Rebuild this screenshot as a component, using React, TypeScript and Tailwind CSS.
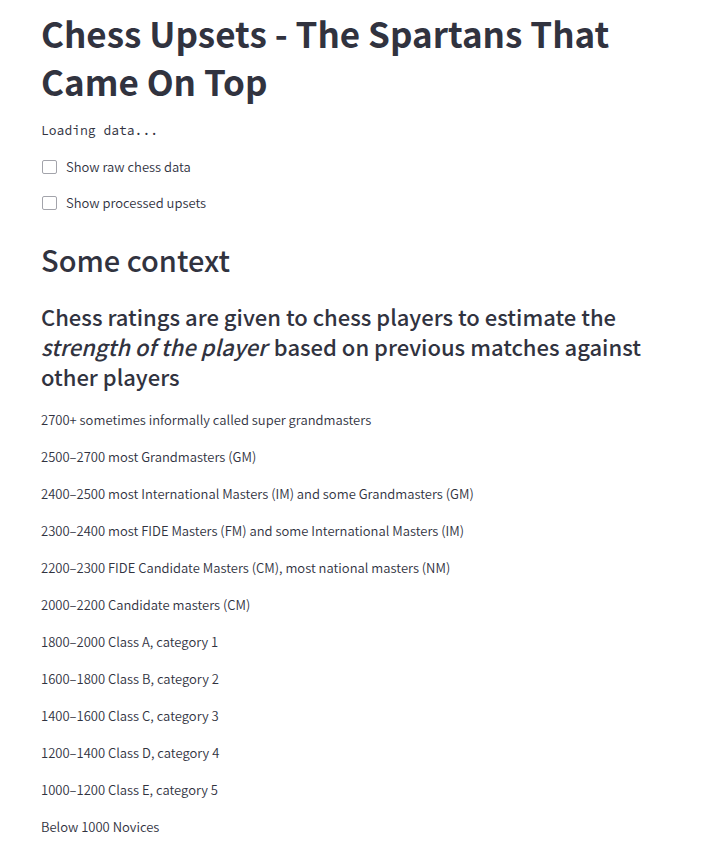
const ratings = [
  '2700+ sometimes informally called super grandmasters',
  '2500–2700 most Grandmasters (GM)',
  '2400–2500 most International Masters (IM) and some Grandmasters (GM)',
  '2300–2400 most FIDE Masters (FM) and some International Masters (IM)',
  '2200–2300 FIDE Candidate Masters (CM), most national masters (NM)',
  '2000–2200 Candidate masters (CM)',
  '1800–2000 Class A, category 1',
  '1600–1800 Class B, category 2',
  '1400–1600 Class C, category 3',
  '1200–1400 Class D, category 4',
  '1000–1200 Class E, category 5',
  'Below 1000 Novices',
];

function Toggle({ label }: { label: string }) {
  return (
    <label className="flex h-5 items-center gap-2 text-[13px] font-[350]">
      <input
        type="checkbox"
        className="m-px h-[14px] w-[15px] appearance-none rounded-xs border border-[#a3a4ab] bg-white checked:bg-[#ff4b4b]"
      />
      {label}
    </label>
  );
}

export default function App() {
  return (
    <main className="bg-white px-[41px] pt-[9px] pb-2 font-['Source_Sans_Pro','Noto_Sans_CJK_SC',sans-serif] text-[#31333f]">
      <h1 className="text-[35px] leading-[48px] font-bold">Chess Upsets - The Spartans That Came On Top</h1>
      <pre className="mt-4 font-['Source_Code_Pro','Noto_Sans_Mono_CJK_SC','Liberation_Mono',monospace] text-[13px] leading-5 font-normal">Loading data...</pre>
      <div className="mt-4 flex flex-col gap-4">
        <Toggle label="Show raw chess data" />
        <Toggle label="Show processed upsets" />
      </div>
      <h2 className="mt-[26px] text-[29px] leading-[40px] font-medium">Some context</h2>
      <h3 className="mt-[22px] text-[22px] leading-[30px] font-medium">
        Chess ratings are given to chess players to estimate the <em className="mr-0.5">strength of the player</em> based on previous
        matches against other players
      </h3>
      <div className="mt-[18px] flex flex-col gap-4 text-[13px] leading-[21px] font-[350]">
        {ratings.map((r) => (
          <p key={r}>{r}</p>
        ))}
      </div>
    </main>
  );
}
